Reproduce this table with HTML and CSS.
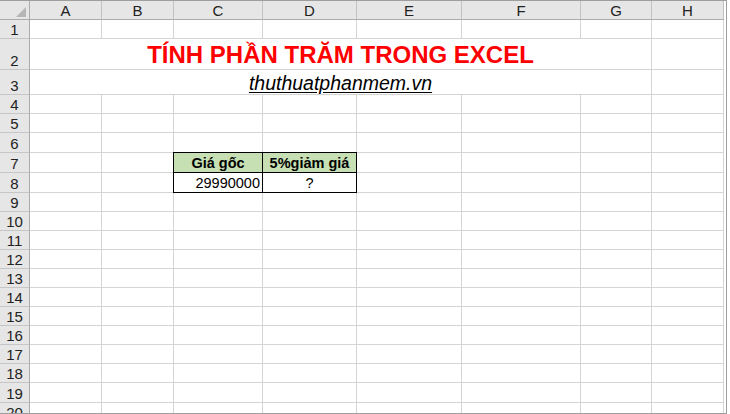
FILE: index.html
```html
<!DOCTYPE html>
<html>
<head>
<meta charset="utf-8">
<link rel="stylesheet" href="styles.css">
</head>
<body>
<div class="sheet">
  <div class="grid">
    <div class="c corner"><svg width="10" height="10" viewBox="0 0 10 10"><polygon points="10,0 10,10 0,10" fill="#b5b5b5"/></svg></div>
    <div class="c ch">A</div><div class="c ch">B</div><div class="c ch">C</div><div class="c ch">D</div><div class="c ch">E</div><div class="c ch">F</div><div class="c ch">G</div><div class="c ch">H</div>

    <div class="c rh">1</div><div class="c"></div><div class="c"></div><div class="c"></div><div class="c"></div><div class="c"></div><div class="c"></div><div class="c"></div><div class="c"></div>

    <div class="c rh">2</div><div class="c merged title">TÍNH PHẦN TRĂM TRONG EXCEL</div><div class="c"></div>

    <div class="c rh">3</div><div class="c merged sub"><span class="link">thuthuatphanmem.vn</span></div><div class="c"></div>

    <div class="c rh">4</div><div class="c"></div><div class="c"></div><div class="c"></div><div class="c"></div><div class="c"></div><div class="c"></div><div class="c"></div><div class="c"></div>
    <div class="c rh">5</div><div class="c"></div><div class="c"></div><div class="c"></div><div class="c"></div><div class="c"></div><div class="c"></div><div class="c"></div><div class="c"></div>
    <div class="c rh">6</div><div class="c"></div><div class="c"></div><div class="c"></div><div class="c"></div><div class="c"></div><div class="c"></div><div class="c"></div><div class="c"></div>

    <div class="c rh">7</div><div class="c"></div><div class="c"></div><div class="c tcell thead corner-tl">Giá gốc</div><div class="c tcell thead ttop">5%giảm giá</div><div class="c"></div><div class="c"></div><div class="c"></div><div class="c"></div>

    <div class="c rh">8</div><div class="c"></div><div class="c"></div><div class="c tcell tnum tleft">29990000</div><div class="c tcell tmid">?</div><div class="c"></div><div class="c"></div><div class="c"></div><div class="c"></div>

    <div class="c rh">9</div><div class="c"></div><div class="c"></div><div class="c"></div><div class="c"></div><div class="c"></div><div class="c"></div><div class="c"></div><div class="c"></div>
    <div class="c rh">10</div><div class="c"></div><div class="c"></div><div class="c"></div><div class="c"></div><div class="c"></div><div class="c"></div><div class="c"></div><div class="c"></div>
    <div class="c rh">11</div><div class="c"></div><div class="c"></div><div class="c"></div><div class="c"></div><div class="c"></div><div class="c"></div><div class="c"></div><div class="c"></div>
    <div class="c rh">12</div><div class="c"></div><div class="c"></div><div class="c"></div><div class="c"></div><div class="c"></div><div class="c"></div><div class="c"></div><div class="c"></div>
    <div class="c rh">13</div><div class="c"></div><div class="c"></div><div class="c"></div><div class="c"></div><div class="c"></div><div class="c"></div><div class="c"></div><div class="c"></div>
    <div class="c rh">14</div><div class="c"></div><div class="c"></div><div class="c"></div><div class="c"></div><div class="c"></div><div class="c"></div><div class="c"></div><div class="c"></div>
    <div class="c rh">15</div><div class="c"></div><div class="c"></div><div class="c"></div><div class="c"></div><div class="c"></div><div class="c"></div><div class="c"></div><div class="c"></div>
    <div class="c rh">16</div><div class="c"></div><div class="c"></div><div class="c"></div><div class="c"></div><div class="c"></div><div class="c"></div><div class="c"></div><div class="c"></div>
    <div class="c rh">17</div><div class="c"></div><div class="c"></div><div class="c"></div><div class="c"></div><div class="c"></div><div class="c"></div><div class="c"></div><div class="c"></div>
    <div class="c rh">18</div><div class="c"></div><div class="c"></div><div class="c"></div><div class="c"></div><div class="c"></div><div class="c"></div><div class="c"></div><div class="c"></div>
    <div class="c rh">19</div><div class="c"></div><div class="c"></div><div class="c"></div><div class="c"></div><div class="c"></div><div class="c"></div><div class="c"></div><div class="c"></div>
    <div class="c rh">20</div><div class="c"></div><div class="c"></div><div class="c"></div><div class="c"></div><div class="c"></div><div class="c"></div><div class="c"></div><div class="c"></div>
  </div>
</div>
</body>
</html>
```

FILE: styles.css
```css
html, body {
  margin: 0;
  padding: 0;
  background: #ffffff;
}

.sheet {
  width: 726px;
  height: 412px;
  border-top: 1px solid #9e9e9e;
  border-right: 1px solid #9e9e9e;
  border-bottom: 1px solid #9e9e9e;
  overflow: hidden;
  font-family: "Liberation Sans", Arial, sans-serif;
  font-size: 14.5px;
  color: #000;
}

.grid {
  width: 724px;
  display: grid;
  grid-template-columns: 30px 72px 72px 89px 94px 105px 119px 71px 72px;
  grid-template-rows: 19px 19px 31px 25px 19px 19px 20px 20px 20px repeat(10, 19px) 20px 19px;
}

.c {
  box-sizing: border-box;
  border-right: 1px solid #d4d4d4;
  border-bottom: 1px solid #d4d4d4;
  line-height: 14px;
  min-width: 0;
}

.corner {
  background: #e6e6e6;
  border-right-color: #ababab;
  border-bottom-color: #ababab;
  display: flex;
  justify-content: flex-end;
  align-items: flex-end;
  padding: 0 3px 2px 0;
}

.corner svg {
  display: block;
}

.ch {
  background: #e6e6e6;
  border-right-color: #c2c2c2;
  border-bottom-color: #ababab;
  display: flex;
  justify-content: center;
  align-items: center;
  padding-top: 1px;
  font-size: 15px;
  color: #222;
}

.rh {
  background: #e6e6e6;
  border-right-color: #ababab;
  border-bottom-color: #c6c6c6;
  display: flex;
  justify-content: center;
  align-items: flex-end;
  padding-bottom: 1px;
  font-size: 15px;
  color: #222;
}

.merged {
  grid-column: span 7;
  display: flex;
  justify-content: center;
  align-items: flex-end;
}

.title {
  color: #ff0000;
  font-weight: bold;
  font-size: 24px;
  line-height: 24px;
  padding-bottom: 2px;
}

.sub {
  font-size: 19.5px;
  line-height: 19px;
  padding-bottom: 1px;
}

.link {
  font-style: italic;
  text-decoration: underline;
  text-underline-offset: 2px;
}

.tcell {
  border-right-color: #000;
  border-bottom-color: #000;
  display: flex;
  align-items: center;
}

.thead {
  background: #c6e0b4;
  font-weight: bold;
  justify-content: center;
}

.tnum {
  justify-content: flex-end;
  padding-right: 2px;
}

.tmid {
  justify-content: center;
}

.tleft {
  box-shadow: -1px 0 0 #000;
}

.ttop {
  box-shadow: 0 -1px 0 #000;
}

.corner-tl {
  box-shadow: -1px 0 0 #000, 0 -1px 0 #000, -1px -1px 0 #000;
}
```
